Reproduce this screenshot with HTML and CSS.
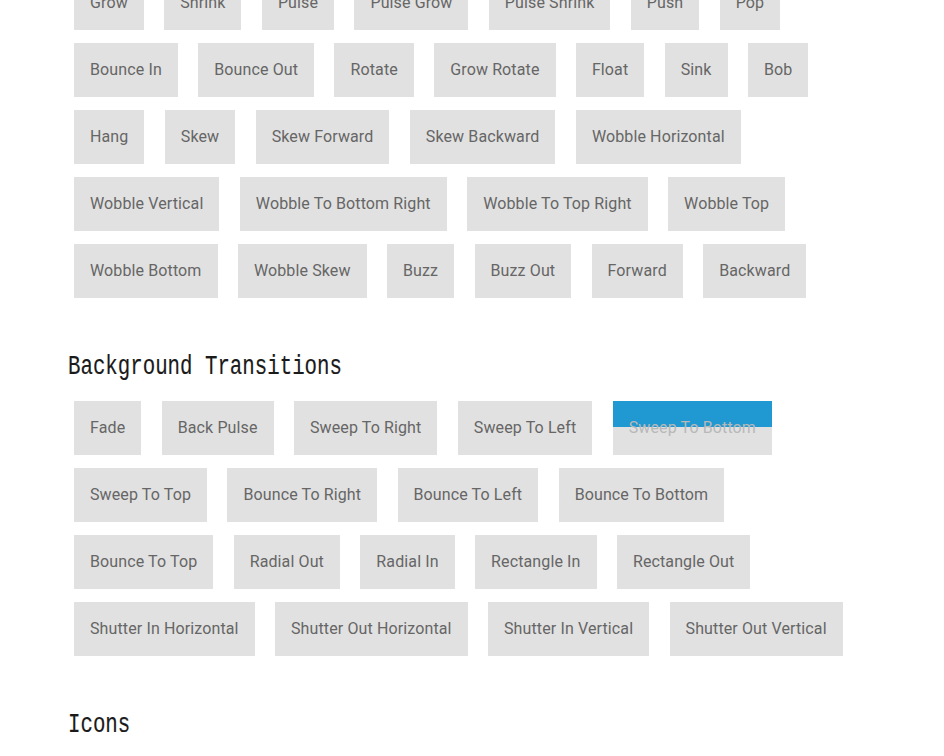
FILE: index.html
```html
<!DOCTYPE html>
<html>
<head>
<meta charset="utf-8">
<link rel="stylesheet" href="styles.css">
</head>
<body>
<div class="page">
  <div class="buttons first">
    <a class="button">Grow</a>
    <a class="button">Shrink</a>
    <a class="button">Pulse</a>
    <a class="button">Pulse Grow</a>
    <a class="button">Pulse Shrink</a>
    <a class="button">Push</a>
    <a class="button">Pop</a>
    <a class="button">Bounce In</a>
    <a class="button">Bounce Out</a>
    <a class="button">Rotate</a>
    <a class="button">Grow Rotate</a>
    <a class="button">Float</a>
    <a class="button">Sink</a>
    <a class="button">Bob</a>
    <a class="button">Hang</a>
    <a class="button">Skew</a>
    <a class="button">Skew Forward</a>
    <a class="button">Skew Backward</a>
    <a class="button">Wobble Horizontal</a>
    <a class="button">Wobble Vertical</a>
    <a class="button">Wobble To Bottom Right</a>
    <a class="button">Wobble To Top Right</a>
    <a class="button">Wobble Top</a>
    <a class="button">Wobble Bottom</a>
    <a class="button">Wobble Skew</a>
    <a class="button">Buzz</a>
    <a class="button">Buzz Out</a>
    <a class="button">Forward</a>
    <a class="button">Backward</a>
  </div>

  <h2 class="title"><span class="title-text">Background Transitions</span></h2>
  <div class="buttons">
    <a class="button">Fade</a>
    <a class="button">Back Pulse</a>
    <a class="button">Sweep To Right</a>
    <a class="button">Sweep To Left</a>
    <a class="button sweeping">Sweep To Bottom</a>
    <a class="button">Sweep To Top</a>
    <a class="button">Bounce To Right</a>
    <a class="button">Bounce To Left</a>
    <a class="button">Bounce To Bottom</a>
    <a class="button">Bounce To Top</a>
    <a class="button">Radial Out</a>
    <a class="button">Radial In</a>
    <a class="button">Rectangle In</a>
    <a class="button">Rectangle Out</a>
    <a class="button">Shutter In Horizontal</a>
    <a class="button">Shutter Out Horizontal</a>
    <a class="button">Shutter In Vertical</a>
    <a class="button">Shutter Out Vertical</a>
  </div>

  <h2 class="title"><span class="title-text">Icons</span></h2>
</div>
</body>
</html>
```

FILE: styles.css
```css
html, body {
  margin: 0;
  padding: 0;
  background: #ffffff;
  overflow: hidden;
}

.page {
  padding-left: 74px;
  width: 792px;
}

.buttons {
  display: flex;
  flex-wrap: wrap;
  column-gap: 20.4px;
  row-gap: 13px;
}

.buttons.first {
  margin-top: -24px;
}

.button {
  display: block;
  height: 54px;
  line-height: 54px;
  padding: 0 16px;
  background: #e1e1e1;
  color: #666666;
  font-family: Roboto, "Liberation Sans", sans-serif;
  font-size: 16px;
  letter-spacing: 0.12px;
  text-decoration: none;
  white-space: nowrap;
}

.button.sweeping {
  background: linear-gradient(to bottom, #2098d1 0, #2098d1 26px, #e1e1e1 26px, #e1e1e1 100%);
  color: #b8b8b8;
}

.title {
  margin: 53.8px 0 19.4px -6px;
  height: 30px;
  line-height: 30px;
  font-family: "Liberation Mono", monospace;
  font-weight: normal;
  font-size: 27px;
  color: #1a1a1a;
  white-space: nowrap;
}

.title-text {
  display: inline-block;
  transform: scaleX(0.7685);
  transform-origin: left center;
  -webkit-text-stroke: 0.15px #1a1a1a;
}
```
